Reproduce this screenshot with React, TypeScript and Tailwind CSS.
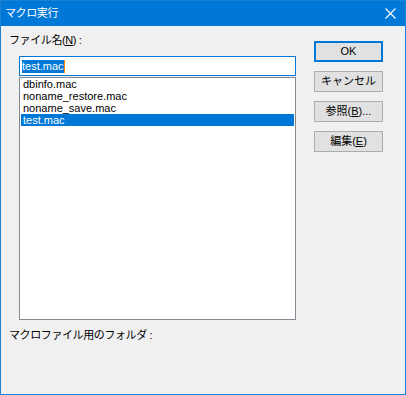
import * as React from "react";

const files = ["dbinfo.mac", "noname_restore.mac", "noname_save.mac", "test.mac"];

const font = { fontFamily: '"Liberation Sans", "Noto Sans CJK JP", sans-serif' };

interface ButtonProps {
  children: React.ReactNode;
  primary?: boolean;
}

const DialogButton: React.FC<ButtonProps> = ({ children, primary }) => (
  <button
    type="button"
    className={`flex h-[21px] w-[69px] items-center justify-center bg-[#e1e1e1] text-[11px] leading-none text-black ${
      primary ? "border-2 border-[#0078d7]" : "border border-[#adadad]"
    }`}
  >
    {children}
  </button>
);

const CloseIcon: React.FC = () => (
  <svg width="11" height="11" viewBox="0 0 11 11" className="shrink-0">
    <path d="M0.5 0.5 L10.5 10.5 M10.5 0.5 L0.5 10.5" stroke="#ffffff" strokeWidth="1.1" />
  </svg>
);

export default function App() {
  return (
    <div
      className="flex h-[395px] w-[406px] flex-col border border-[#1a82d7] bg-[#f0f0f0] text-black"
      style={font}
    >
      <header className="flex h-[25px] shrink-0 items-center justify-between bg-[#0078d7] pl-[4px] pr-[9px] text-[11px] text-white">
        <span className="tracking-[-0.4px]">マクロ実行</span>
        <CloseIcon />
      </header>

      <div className="flex flex-1 pl-[8px]">
        <div className="flex w-[287px] flex-col pt-[7px]">
          <div className="text-[11px] leading-[14px] tracking-[-0.4px]">
            ファイル名(<span className="underline">N</span>) :
          </div>

          <div className="ml-[10px] mt-[9px] flex h-[20px] w-[277px] items-center border border-[#0078d7] bg-white pl-[2px]">
            <span className="border-r border-[#ff8c00] bg-[#0078d7] text-[11px] leading-[13px] text-white">
              test.mac
            </span>
          </div>

          <ul className="ml-[10px] mt-px h-[243px] w-[277px] border border-[#828790] bg-white px-px">
            {files.map((name) => (
              <li
                key={name}
                className={`h-[12px] pl-[2px] text-[11px] leading-[12px] ${
                  name === "test.mac" ? "bg-[#0078d7] text-white" : ""
                }`}
              >
                {name}
              </li>
            ))}
          </ul>

          <div className="mt-[8px] text-[11px] leading-[14px] tracking-[-0.4px]">
            マクロファイル用のフォルダ :
          </div>
        </div>

        <div className="ml-[18px] flex flex-col gap-[9px] pt-[15px]">
          <DialogButton primary>OK</DialogButton>
          <DialogButton>キャンセル</DialogButton>
          <DialogButton>
            参照(<span className="underline">B</span>)...
          </DialogButton>
          <DialogButton>
            編集(<span className="underline">E</span>)
          </DialogButton>
        </div>
      </div>
    </div>
  );
}
